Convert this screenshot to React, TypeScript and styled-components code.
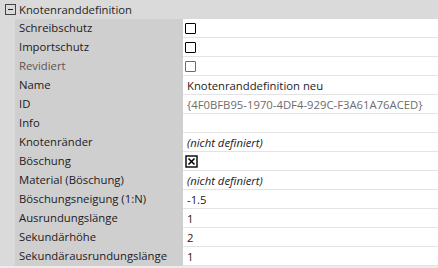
import React from 'react';
import styled, { createGlobalStyle } from 'styled-components';

const GlobalStyle = createGlobalStyle`
  html, body {
    margin: 0;
    padding: 0;
    background: #ececec;
  }
  body {
    font-family: "Open Sans", "Noto Sans", "DejaVu Sans", sans-serif;
    font-size: 11.3px;
  }
`;

const Grid = styled.div`
  width: 438px;
  height: 268px;
  background: #ececec;
  overflow: hidden;
`;

const CategoryHeader = styled.div`
  display: flex;
  align-items: center;
  height: 19px;
  background: #dadada;
  color: #1e1e1e;
`;

const Toggle = styled.span`
  display: flex;
  width: 19px;
  justify-content: center;
  padding-left: 1px;
  box-sizing: border-box;
`;

const Row = styled.div`
  display: grid;
  grid-template-columns: 15px 168px 1fr;
  height: 19px;
`;

const Gutter = styled.div`
  background: #dadada;
`;

const Label = styled.div<{ $muted?: boolean }>`
  background: #cfcfcf;
  color: ${(p) => (p.$muted ? '#5e5454' : '#1e1a1e')};
  padding-left: 4px;
  line-height: 18px;
  white-space: nowrap;
`;

const Value = styled.div<{ $muted?: boolean; $italic?: boolean }>`
  display: flex;
  align-items: center;
  background: #ffffff;
  border-bottom: 1px solid #e3e3e3;
  padding-left: 4px;
  color: ${(p) => (p.$muted ? '#6d6d6d' : '#1e1a1e')};
  font-style: ${(p) => (p.$italic ? 'italic' : 'normal')};
  white-space: nowrap;
`;

const Box = styled.span<{ $muted?: boolean }>`
  display: block;
  width: 9px;
  height: 9px;
  margin-left: -2px;
  border: 1px solid ${(p) => (p.$muted ? '#6a6a6a' : '#000000')};
  border-radius: 1px;
  background: #ffffff;
`;

const Check = ({ checked, muted }: { checked?: boolean; muted?: boolean }) =>
  checked ? (
    <svg width="13" height="13" viewBox="0 0 13 13" style={{ marginLeft: -2 }}>
      <rect x="1" y="1" width="11" height="11" fill="#fff" stroke="#000" strokeWidth="1.4" />
      <path d="M3.5 3.5 L9.5 9.5 M9.5 3.5 L3.5 9.5" stroke="#000" strokeWidth="1.6" />
    </svg>
  ) : (
    <Box $muted={muted} />
  );

type Prop = {
  label: string;
  value?: string;
  check?: 'on' | 'off';
  mutedLabel?: boolean;
  mutedValue?: boolean;
  italic?: boolean;
};

const props: Prop[] = [
  { label: 'Schreibschutz', check: 'off' },
  { label: 'Importschutz', check: 'off' },
  { label: 'Revidiert', check: 'off', mutedLabel: true, mutedValue: true },
  { label: 'Name', value: 'Knotenranddefinition neu' },
  { label: 'ID', value: '{4F0BFB95-1970-4DF4-929C-F3A61A76ACED}', mutedValue: true },
  { label: 'Info', value: '' },
  { label: 'Knotenränder', value: '(nicht definiert)', italic: true },
  { label: 'Böschung', check: 'on' },
  { label: 'Material (Böschung)', value: '(nicht definiert)', italic: true },
  { label: 'Böschungsneigung (1:N)', value: '-1.5' },
  { label: 'Ausrundungslänge', value: '1' },
  { label: 'Sekundärhöhe', value: '2' },
  { label: 'Sekundärausrundungslänge', value: '1' },
];

export default function App() {
  return (
    <>
      <GlobalStyle />
      <Grid>
        <CategoryHeader>
          <Toggle>
            <svg width="11" height="11" viewBox="0 0 11 11">
              <rect x="0.5" y="0.5" width="10" height="10" fill="none" stroke="#444" />
              <path d="M3 5.5 H8" stroke="#222" />
            </svg>
          </Toggle>
          Knotenranddefinition
        </CategoryHeader>
        {props.map((p) => (
          <Row key={p.label}>
            <Gutter />
            <Label $muted={p.mutedLabel}>{p.label}</Label>
            <Value $muted={p.mutedValue} $italic={p.italic}>
              {p.check ? <Check checked={p.check === 'on'} muted={p.mutedValue} /> : p.value}
            </Value>
          </Row>
        ))}
      </Grid>
    </>
  );
}
